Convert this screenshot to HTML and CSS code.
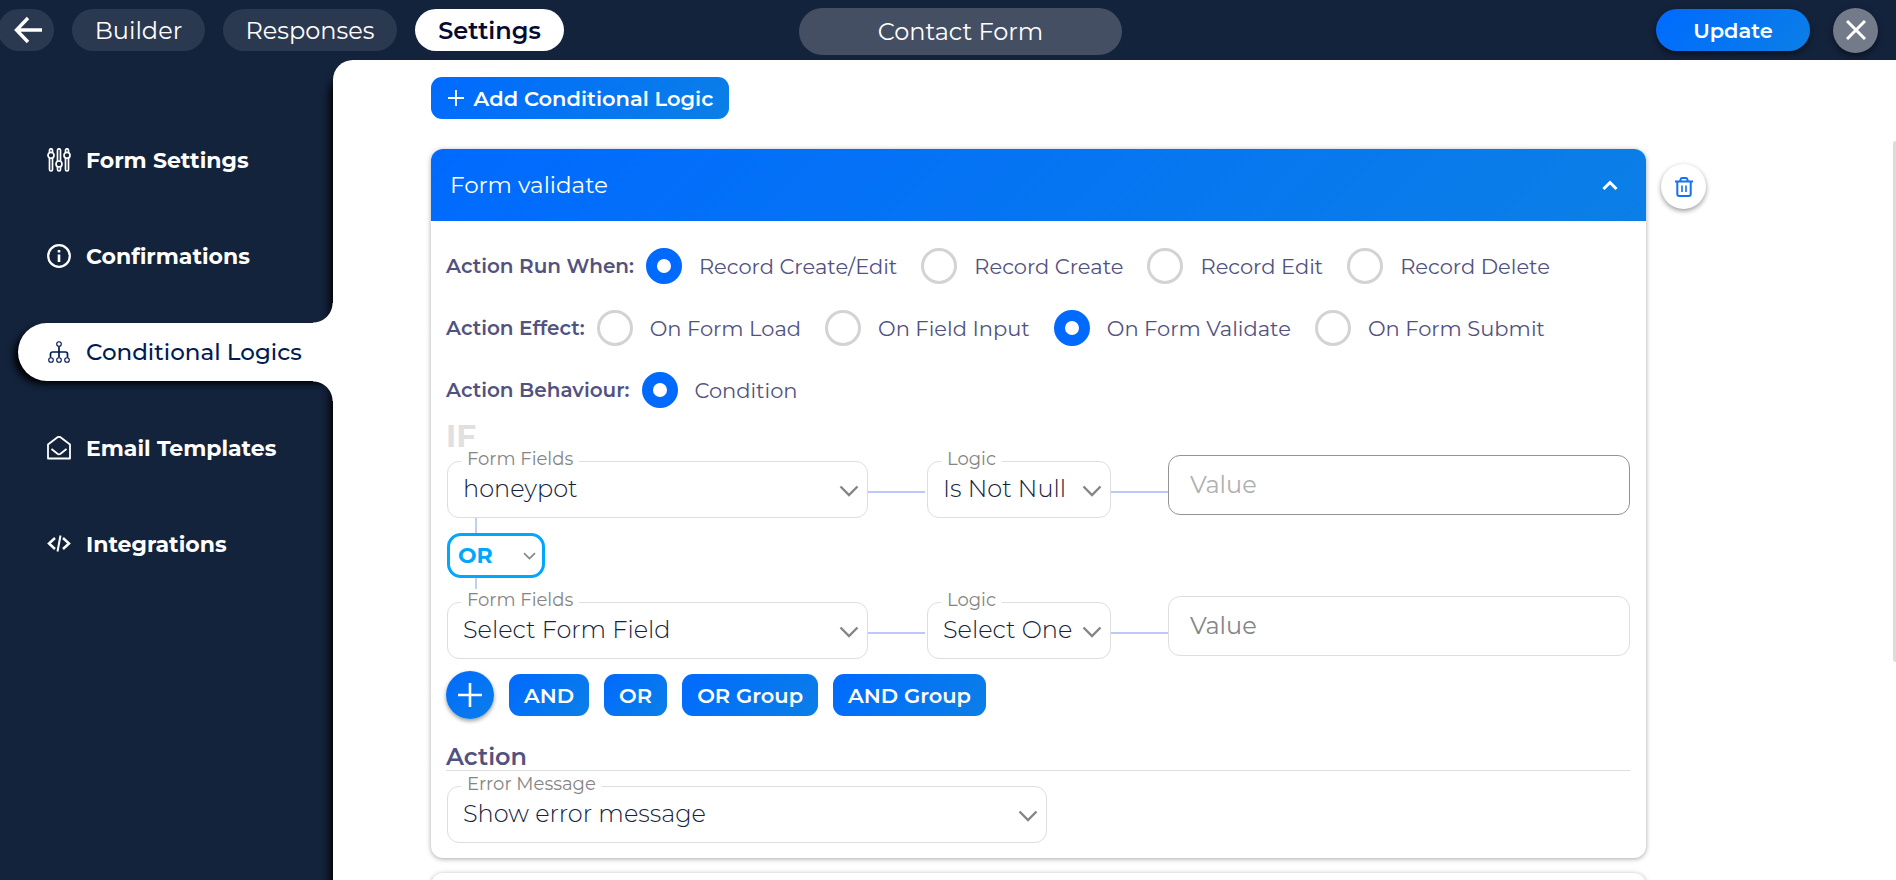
FILE: index.html
```html
<!DOCTYPE html>
<html lang="en">
<head>
<meta charset="utf-8">
<title>Contact Form - Conditional Logics</title>
<link rel="stylesheet" href="styles.css">
</head>
<body>
<svg class="sprite" aria-hidden="true">
  <symbol id="chevron" viewBox="0 0 20 12"><path d="M1.500 1.500 10 10l8.500-8.500" fill="none" stroke="currentColor" stroke-width="2.400"/></symbol>
</svg>
<div class="app">
  <header class="topbar">
    <nav class="tabs" aria-label="Form">
      <a class="back" href="#" aria-label="Back"><svg width="28" height="28" viewBox="0 0 28 28"><path d="M14 2 2.500 14 14 26M2 14h26" fill="none" stroke="#fff" stroke-width="3.400"/></svg></a>
      <a class="tab tab-builder" href="#">Builder</a>
      <a class="tab tab-responses" href="#">Responses</a>
      <a class="tab tab-settings is-current" href="#">Settings</a>
    </nav>
    <input class="form-name" type="text" value="Contact Form" aria-label="Form name">
    <div class="top-actions">
      <button class="update" type="button">Update</button>
      <button class="close" type="button" aria-label="Close"><svg width="20" height="20" viewBox="0 0 20 20"><path d="M1 1l18 18M19 1 1 19" stroke="#fff" stroke-width="3"/></svg></button>
    </div>
  </header>

  <div class="body">
    <nav class="sidebar" aria-label="Settings">
      <a class="side-link" href="#">
        <svg width="24" height="24" viewBox="0 0 24 24" fill="none" stroke="currentColor" stroke-width="1.700"><path d="M2.500 4.500V2.300a1.500 1.500 0 0 1 3 0v2.200M2.500 10v11.500a1.500 1.500 0 0 0 3 0V10M10.500 13V2.300a1.500 1.500 0 0 1 3 0V13M10.500 18.500v3a1.500 1.500 0 0 0 3 0v-3M18.500 4.500V2.300a1.500 1.500 0 0 1 3 0v2.200M18.500 10v11.500a1.500 1.500 0 0 0 3 0V10"/><circle cx="4" cy="7.300" r="3"/><circle cx="12" cy="16" r="3"/><circle cx="20" cy="7.300" r="3"/></svg>
        Form Settings</a>
      <a class="side-link" href="#">
        <svg width="24" height="24" viewBox="0 0 24 24" fill="none" stroke="currentColor" stroke-width="2.200"><circle cx="12" cy="12" r="10.800"/><path d="M12 10.500v7.500M12 6v2.500" stroke-width="2.600"/></svg>
        Confirmations</a>
      <a class="side-link is-active" href="#">
        <svg width="24" height="24" viewBox="0 0 24 24" fill="none" stroke="currentColor" stroke-width="1.100"><circle cx="12" cy="4" r="2.300"/><circle cx="4" cy="20" r="2.300"/><circle cx="12" cy="20" r="2.300"/><circle cx="20" cy="20" r="2.300"/><path d="M12 6.500v11M3.500 17.500V14a2 2 0 0 1 2-2h13a2 2 0 0 1 2 2v3.500" stroke-width="1.700"/></svg>
        Conditional Logics</a>
      <a class="side-link" href="#">
        <svg width="24" height="24" viewBox="0 0 24 24" fill="none" stroke="currentColor" stroke-width="1.800" stroke-linejoin="round"><path d="M1 8.500v14h22v-14L13.500 1.300a2.500 2.500 0 0 0-3 0zM4.500 13l6 4.800a2.500 2.500 0 0 0 3 0l6-4.800"/></svg>
        Email Templates</a>
      <a class="side-link" href="#">
        <svg width="24" height="24" viewBox="0 0 24 24" fill="none" stroke="currentColor" stroke-width="2.500"><path d="M8 6 2 11.500 8 17M16 6l6 5.500L16 17"/><path d="M13.500 3.500l-3 16" stroke-width="2"/></svg>
        Integrations</a>
    </nav>

    <main class="content">
      <button class="add-logic" type="button"><svg width="18" height="18" viewBox="0 0 18 18"><path d="M9 1v16M1 9h16" stroke="#fff" stroke-width="1.800"/></svg>Add Conditional Logic</button>

      <div class="logic-row">
        <section class="card">
          <button class="card-head" type="button" aria-expanded="true">
            <span>Form validate</span>
            <svg width="16" height="11" viewBox="0 0 16 11"><path d="M1.500 9 8 2.500 14.500 9" fill="none" stroke="#fff" stroke-width="3"/></svg>
          </button>
          <div class="card-body">
            <div class="radio-rows">
              <div class="radio-row" role="radiogroup" aria-labelledby="run-when">
                <span class="radio-title" id="run-when">Action Run When:</span>
                <label class="option"><input type="radio" name="run" checked>Record Create/Edit</label>
                <label class="option"><input type="radio" name="run">Record Create</label>
                <label class="option"><input type="radio" name="run">Record Edit</label>
                <label class="option"><input type="radio" name="run">Record Delete</label>
              </div>
              <div class="radio-row" role="radiogroup" aria-labelledby="effect">
                <span class="radio-title" id="effect">Action Effect:</span>
                <label class="option"><input type="radio" name="effect">On Form Load</label>
                <label class="option"><input type="radio" name="effect">On Field Input</label>
                <label class="option"><input type="radio" name="effect" checked>On Form Validate</label>
                <label class="option"><input type="radio" name="effect">On Form Submit</label>
              </div>
              <div class="radio-row" role="radiogroup" aria-labelledby="behaviour">
                <span class="radio-title" id="behaviour">Action Behaviour:</span>
                <label class="option"><input type="radio" name="behaviour" checked>Condition</label>
              </div>
            </div>

            <h2 class="if-title">IF</h2>
            <div class="conditions">
              <div class="condition">
                <div class="field"><label for="field-1">Form Fields</label><select id="field-1"><option>honeypot</option></select><svg class="chevron"><use href="#chevron"/></svg></div>
                <span class="link-line"></span>
                <div class="field"><label for="logic-1">Logic</label><select id="logic-1"><option>Is Not Null</option></select><svg class="chevron"><use href="#chevron"/></svg></div>
                <span class="link-line"></span>
                <input class="value is-disabled" type="text" placeholder="Value" aria-label="Value" disabled>
              </div>
              <div class="joiner">
                <span class="stem"></span>
                <div class="join-select"><select aria-label="Join with"><option>OR</option></select><svg class="chevron chevron-small"><use href="#chevron"/></svg></div>
                <span class="stem"></span>
              </div>
              <div class="condition">
                <div class="field"><label for="field-2">Form Fields</label><select id="field-2"><option>Select Form Field</option></select><svg class="chevron"><use href="#chevron"/></svg></div>
                <span class="link-line"></span>
                <div class="field"><label for="logic-2">Logic</label><select id="logic-2"><option>Select One</option></select><svg class="chevron"><use href="#chevron"/></svg></div>
                <span class="link-line"></span>
                <input class="value" type="text" placeholder="Value" aria-label="Value">
              </div>
            </div>

            <div class="add-buttons">
              <button class="plus" type="button" aria-label="Add condition"><svg width="24" height="24" viewBox="0 0 24 24"><path d="M12 0v24M0 12h24" stroke="#fff" stroke-width="2.600"/></svg></button>
              <button class="chip" type="button">AND</button>
              <button class="chip" type="button">OR</button>
              <button class="chip" type="button">OR Group</button>
              <button class="chip" type="button">AND Group</button>
            </div>

            <h3 class="action-title">Action</h3>
            <div class="field action-field"><label for="error">Error Message</label><select id="error"><option>Show error message</option></select><svg class="chevron"><use href="#chevron"/></svg></div>
          </div>
        </section>
        <button class="trash" type="button" aria-label="Delete logic"><svg width="18" height="20" viewBox="0 0 18 20" fill="none" stroke="#1671f5" stroke-width="2"><path d="M0 4.500h18M5 4.500l.8-2.600Q6.100 1 7 1h4q.9 0 1.200.9l.8 2.600M2.300 4.500V17q0 2 2 2h9.400q2 0 2-2V4.500"/><path d="M7 8.500v6.500M11 8.500v6.500" stroke-width="1.600"/></svg></button>
      </div>
      <section class="card next-card" aria-label="Next logic"></section>
      <span class="scroll-thumb"></span>
    </main>
  </div>
</div>
</body>
</html>
```
FILE: styles.css
```css
* { box-sizing: border-box; }

:root {
  --navy: #13233c;
  --purple: #52527f;
  --blue-fade: linear-gradient(135deg, #006aff, #0b7fe6);
}

body {
  margin: 0;
  background: var(--navy);
  color: var(--navy);
  font-family: Montserrat, Inter, "Open Sans", sans-serif;
}

button, input, select { font: inherit; margin: 0; }
button { border: 0; padding: 0; cursor: pointer; color: #fff; }
a { text-decoration: none; }
svg { flex: none; }
.sprite { display: none; }

.app {
  display: flex;
  flex-direction: column;
  height: 100vh;
  overflow: hidden;
}

/* Top bar */
.topbar {
  display: grid;
  grid-template-columns: 799fr 323px 756fr;
  align-items: center;
  height: 60px;
  flex: none;
  padding-right: 18px;
}
.tabs { display: flex; gap: 18px; margin-left: -2px; }
.back, .tab {
  display: flex;
  align-items: center;
  justify-content: center;
  height: 42px;
  border-radius: 21px;
  background: #2b3950;
  color: #fff;
  font-size: 24px;
}
.back { width: 56px; padding-left: 4px; }
.tab-builder { width: 133px; }
.tab-responses { width: 174px; }
.tab-settings { width: 149px; }
.tab.is-current { background: #fff; color: #060a30; font-weight: 600; }
.form-name {
  height: 47px;
  margin-top: 3px;
  border: 0;
  border-radius: 24px;
  background: #444f63;
  color: #fff;
  font-size: 24px;
  text-align: center;
}
.top-actions { display: flex; justify-content: flex-end; align-items: center; gap: 23px; }
.update {
  width: 154px;
  height: 42px;
  border-radius: 21px;
  background: var(--blue-fade);
  box-shadow: 0 3px 6px rgba(0, 0, 0, .5);
  font-size: 21px;
  font-weight: 600;
}
.close {
  display: grid;
  place-items: center;
  width: 45px;
  height: 45px;
  border-radius: 50%;
  background: #737b8a;
  box-shadow: 0 3px 6px rgba(0, 0, 0, .5);
}

/* Sidebar */
.body { display: flex; flex: 1; min-height: 0; }
.sidebar {
  position: relative;
  z-index: 1;
  display: flex;
  flex-direction: column;
  gap: 38px;
  flex: none;
  width: 333px;
  padding: 71px 0 0 18px;
}
.side-link {
  position: relative;
  display: flex;
  align-items: center;
  gap: 15px;
  height: 58px;
  padding-left: 29px;
  border-radius: 29px 0 0 29px;
  color: #fff;
  font-size: 22px;
  font-weight: 700;
}
.side-link.is-active {
  background: #fff;
  box-shadow: -5px 4px 7px -1px #000;
  clip-path: inset(-20px 0 -20px -20px);
  color: #001a52;
  font-size: 23px;
  font-weight: 500;
}
.side-link.is-active::before,
.side-link.is-active::after {
  content: "";
  position: absolute;
  right: 0;
  width: 20px;
  height: 20px;
}
.side-link.is-active::before { bottom: 100%; background: radial-gradient(circle at 0 0, transparent 19px, #fff 20px); }
.side-link.is-active::after { top: 100%; background: radial-gradient(circle at 0 100%, transparent 19px, #fff 20px); }

/* Content */
.content {
  position: relative;
  display: flex;
  flex-direction: column;
  flex: 1;
  min-width: 0;
  padding: 17px 190px 0 98px;
  border-top-left-radius: 20px;
  background: #fff;
  box-shadow: -3px 14px 9px #000;
}
.add-logic {
  display: flex;
  align-items: center;
  justify-content: center;
  gap: 9px;
  align-self: flex-start;
  flex: none;
  width: 298px;
  height: 42px;
  margin-bottom: 30px;
  border-radius: 11px;
  background: var(--blue-fade);
  font-size: 21px;
  font-weight: 600;
}
.logic-row { display: flex; align-items: flex-start; gap: 15px; }
.card {
  flex: 1;
  min-width: 0;
  border-radius: 12px;
  background: #fff;
  box-shadow: 0 1px 5px rgba(0, 0, 0, .35);
}
.next-card { flex: none; height: 72px; margin: 15px 60px 0 0; }
.card-head {
  display: flex;
  align-items: center;
  justify-content: space-between;
  width: 100%;
  height: 72px;
  padding: 0 28px 0 19px;
  border-radius: 12px 12px 0 0;
  background: var(--blue-fade);
  font-size: 23px;
}
.trash {
  display: grid;
  place-items: center;
  flex: none;
  width: 45px;
  height: 45px;
  margin-top: 15px;
  border-radius: 50%;
  background: #fff;
  box-shadow: 0 2px 5px rgba(0, 0, 0, .4);
}
.card-body { padding: 27px 16px 15px 15px; }

/* Radio groups */
.radio-rows { display: grid; gap: 26px; color: var(--purple); }
.radio-row { display: flex; align-items: center; gap: 24px; height: 36px; }
.radio-title { margin-right: -12px; font-size: 20px; font-weight: 600; }
.option { display: flex; align-items: center; gap: 17px; font-size: 21px; font-weight: 400; }
.option input {
  appearance: none;
  flex: none;
  width: 36px;
  height: 36px;
  border: 3px solid #d3d3d3;
  border-radius: 50%;
  background: #fff;
}
.option input:checked { border: 11px solid #006aff; }

/* Conditions */
.if-title {
  margin: 12px 0 3px;
  color: #e0e0e0;
  font-size: 31px;
  font-weight: 700;
  line-height: 32px;
}
.conditions { padding-left: 1px; }
.condition {
  display: grid;
  grid-template-columns: 421fr 59px 184px 57px 462fr;
  align-items: start;
}
.field { position: relative; margin-top: 6px; }
.field label {
  position: absolute;
  top: -13px;
  left: 14px;
  padding: 0 6px;
  background: #fff;
  color: #858585;
  font-size: 18px;
  font-weight: 400;
  line-height: 22px;
}
.field select {
  appearance: none;
  display: block;
  width: 100%;
  height: 57px;
  padding: 0 30px 3px 15px;
  border: 1px solid #dedede;
  border-radius: 12px;
  background: #fff;
  color: var(--navy);
  font-size: 24px;
  font-weight: 300;
}
.chevron {
  position: absolute;
  right: 9px;
  top: 24px;
  width: 20px;
  height: 12px;
  color: #858585;
  pointer-events: none;
}
.link-line { height: 2px; margin-top: 36px; background: #bcc8fb; }
.condition .link-line:nth-child(2) { margin-right: 2px; }
.value {
  width: 100%;
  height: 60px;
  padding: 0 21px 2px;
  border: 1px solid #dedede;
  border-radius: 12px;
  background: #fff;
  font-size: 24px;
}
.value::placeholder { color: #858585; opacity: 1; }
.value.is-disabled { border-color: #939393; }
.value.is-disabled::placeholder { color: #b0b0b0; }
.joiner { display: flex; flex-direction: column; padding-bottom: 3px; }
.stem { width: 2px; height: 15px; margin-left: 28px; background: #c3cdfc; }
.join-select { position: relative; width: 98px; }
.join-select select {
  appearance: none;
  display: block;
  width: 100%;
  height: 45px;
  padding: 0 8px;
  border: 3px solid #00a6ff;
  border-radius: 14px;
  background: #fff;
  color: #00a6ff;
  font-size: 22px;
  font-weight: 700;
}
.chevron-small { width: 13px; height: 8px; top: 19px; }

.add-buttons { display: flex; align-items: center; gap: 15px; margin-top: 12px; }
.plus {
  display: grid;
  place-items: center;
  width: 48px;
  height: 48px;
  border-radius: 50%;
  background: var(--blue-fade);
  box-shadow: 0 2px 4px rgba(0, 0, 0, .4);
}
.chip {
  height: 42px;
  padding: 0 15px;
  border-radius: 11px;
  background: var(--blue-fade);
  font-size: 21px;
  font-weight: 600;
}

/* Action */
.action-title {
  margin: 25px 0 15px;
  border-bottom: 1px solid #dedede;
  color: var(--purple);
  font-size: 24px;
  font-weight: 600;
  line-height: 26px;
}
.action-field { width: 600px; margin: 0 0 0 1px; }

.scroll-thumb {
  position: absolute;
  top: 81px;
  right: 0;
  width: 3px;
  height: 521px;
  border-radius: 3px 0 0 3px;
  background: #dcdcdc;
}
```
